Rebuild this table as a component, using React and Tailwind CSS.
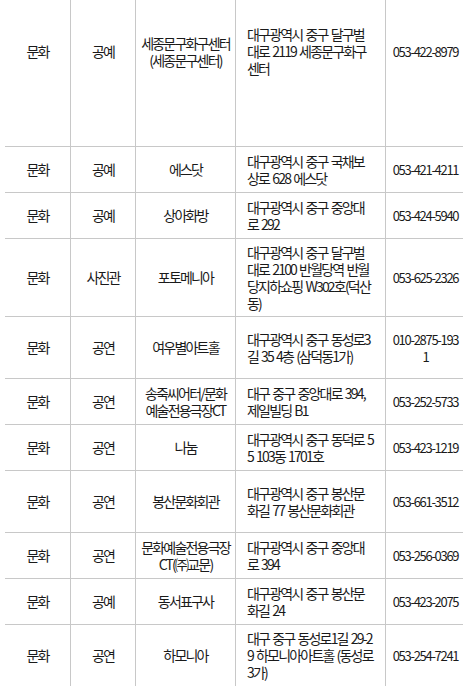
import React from "react";

const rows = [
  { h: "h-[190px]", cat: "문화", kind: "공예", name: "세종문구화구센터(세종문구센터)", addr: "대구광역시 중구 달구벌대로 2119 세종문구화구센터", tel: "053-422-8979" },
  { h: "h-[46px]", cat: "문화", kind: "공예", name: "에스닷", addr: "대구광역시 중구 국채보상로 628 에스닷", tel: "053-421-4211" },
  { h: "h-[46px]", cat: "문화", kind: "공예", name: "상아화방", addr: "대구광역시 중구 중앙대로 292", tel: "053-424-5940" },
  { h: "h-[78px]", cat: "문화", kind: "사진관", name: "포토메니아", addr: "대구광역시 중구 달구벌대로 2100 반월당역 반월당지하쇼핑 W302호(덕산동)", tel: "053-625-2326" },
  { h: "h-[62px]", cat: "문화", kind: "공연", name: "여우별아트홀", addr: "대구광역시 중구 동성로3길 35 4층 (삼덕동1가)", tel: "010-2875-1931" },
  { h: "h-[46px]", cat: "문화", kind: "공연", name: "송죽씨어터/문화예술전용극장CT", addr: "대구 중구 중앙대로 394, 제일빌딩 B1", tel: "053-252-5733" },
  { h: "h-[46px]", cat: "문화", kind: "공연", name: "나눔", addr: "대구광역시 중구 동덕로 55 103동 1701호", tel: "053-423-1219" },
  { h: "h-[62px]", cat: "문화", kind: "공연", name: "봉산문화회관", addr: "대구광역시 중구 봉산문화길 77 봉산문화회관", tel: "053-661-3512" },
  { h: "h-[46px]", cat: "문화", kind: "공연", name: "문화예술전용극장CT(㈜교문)", addr: "대구광역시 중구 중앙대로 394", tel: "053-256-0369" },
  { h: "h-[46px]", cat: "문화", kind: "공예", name: "동서표구사", addr: "대구광역시 중구 봉산문화길 24", tel: "053-423-2075" },
  { h: "h-[62px]", cat: "문화", kind: "공연", name: "하모니아", addr: "대구 중구 동성로1길 29-29 하모니아아트홀 (동성로3가)", tel: "053-254-7241" },
];

const cell = "flex items-center border-l border-[#c8c8c8]";

export default function App() {
  return (
    <div className="w-full h-[686px] overflow-hidden bg-white">
      <div
        className="-mt-[43px] ml-[5px] text-[14px] leading-[17px] tracking-[-1.8px] [word-spacing:1.7px] text-[#1a1a1a]"
        style={{ fontFamily: '"Noto Sans CJK KR", "Noto Sans", sans-serif' }}
      >
        {rows.map((r, i) => (
          <div
            key={i}
            className={`grid grid-cols-[65px_65px_100px_150px_80px] border-b border-[#c8c8c8] ${r.h}`}
          >
            <div className="flex items-center justify-center">{r.cat}</div>
            <div className={`${cell} justify-center`}>{r.kind}</div>
            <div className={`${cell} justify-center text-center px-[4px]`}>{r.name}</div>
            <div className={`${cell} px-[11px] break-all`}>{r.addr}</div>
            <div className={`${cell} justify-center text-center px-[6px] break-all text-[13px] tracking-[-1.3px]`}>
              {r.tel}
            </div>
          </div>
        ))}
      </div>
    </div>
  );
}
